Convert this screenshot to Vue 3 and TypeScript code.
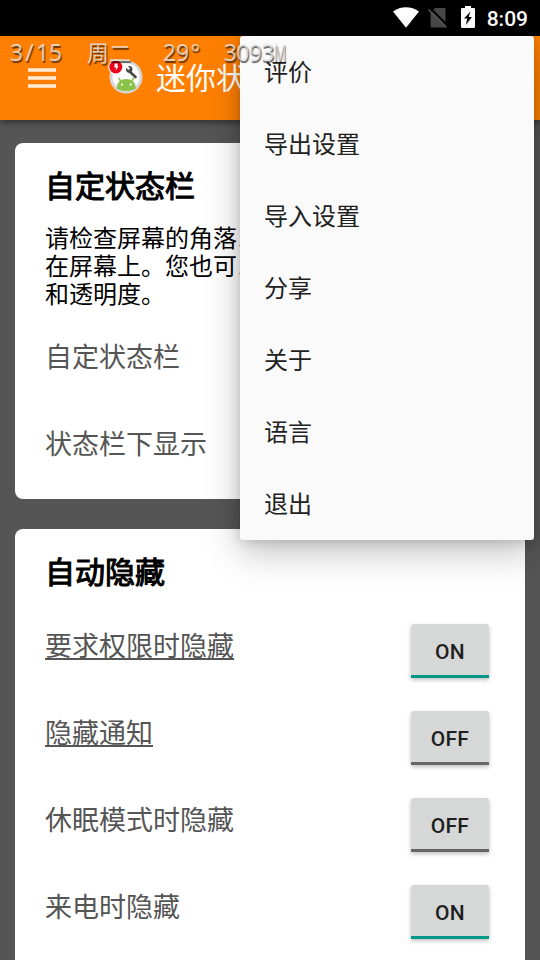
<script setup lang="ts">
interface Option {
  label: string
  on: boolean
  linked: boolean
}

const menuItems: string[] = ['评价', '导出设置', '导入设置', '分享', '关于', '语言', '退出']

const autoHide: Option[] = [
  { label: '要求权限时隐藏', on: true, linked: true },
  { label: '隐藏通知', on: false, linked: true },
  { label: '休眠模式时隐藏', on: false, linked: false },
  { label: '来电时隐藏', on: true, linked: false },
]

const miniStatus: { kind: string; chars: string[] }[] = [
  { kind: 'date', chars: ['3', '/', '1', '5'] },
  { kind: 'weekday', chars: ['周', '二'] },
  { kind: 'temp', chars: ['2', '9', '°'] },
  { kind: 'memory', chars: ['3', '0', '9', '3', 'M'] },
]
</script>

<template>
  <div class="screen">
    <div class="system-bar">
      <svg class="wifi" width="26" height="21" viewBox="0 0 26 21">
        <path d="M0 4.500C7.500-1.300 18.500-1.300 26 4.500L13 20.800z" fill="#fff" />
      </svg>
      <svg class="sim" width="20" height="22" viewBox="0 0 20 22">
        <path d="M7 1h9.500q1 0 1 1v17.500q0 1-1 1h-13q-1 0-1-1V6z" fill="#484848" />
        <path d="M2 1l18 18" stroke="#000" stroke-width="2" />
        <path d="M.5 2.500l18 18" stroke="#555" stroke-width="1.600" />
      </svg>
      <svg class="battery" width="14" height="22" viewBox="0 0 14 22">
        <path d="M4 0h6v2h3q1 0 1 1v18q0 1-1 1H1q-1 0-1-1V3q0-1 1-1h3z" fill="#fff" />
        <path d="M9.500 5.500L3 12.500h3.300L4.800 19 11 11H7.700z" fill="#000" />
      </svg>
      <span class="clock">8:09</span>
    </div>

    <header class="toolbar">
      <svg class="hamburger" width="28" height="20" viewBox="0 0 28 20">
        <path d="M0 2h28M0 10h28M0 18h28" stroke="#fff" stroke-opacity=".85" stroke-width="3.400" />
      </svg>
      <svg class="logo" width="36" height="36" viewBox="0 0 36 36">
        <circle cx="18" cy="18" r="16.500" fill="#d6d6d6" />
        <circle cx="18" cy="17.500" r="13.600" fill="#fff" />
        <path d="M21.500 12.500l6 5.500" stroke="#484848" stroke-width="2.600" stroke-linecap="round" />
        <path d="M18 8.800l2.400 2.300 1.700-1.600-2.200-2.200q3.700-.8 4.600 2 .4 2.500-1.500 4-3 1.200-4.500-.9-1-1.700-.5-3.600z" fill="#484848" />
        <path d="M9 30v-2.300a9.300 7.700 0 0 1 18.600 0V30q-9.300 4-18.600 0z" fill="#8bc34a" />
        <path d="M13 22.500l-2.300-3.500M23.500 22.500l2.300-3.500" stroke="#8bc34a" stroke-width="1.500" />
        <circle cx="14" cy="25.500" r="1.100" fill="#fff" />
        <circle cx="22.700" cy="25.500" r="1.100" fill="#fff" />
        <circle cx="7.800" cy="8" r="7.600" fill="#fff" />
        <circle cx="7.800" cy="8" r="6.500" fill="#f00018" />
        <path d="M6.700 4.500h3.300L9.200 7h1.300l-2.700 4.800.2-3.300H6.400z" fill="#fff" />
      </svg>
      <h1>迷你状态栏</h1>
    </header>

    <main>
      <section class="card">
        <h2>自定状态栏</h2>
        <p>请检查屏幕的角落以确定状态栏显示<br />在屏幕上。您也可以更改颜色、大小<br />和透明度。</p>
        <div class="option first"><span>自定状态栏</span></div>
        <div class="option"><span>状态栏下显示</span></div>
      </section>

      <section class="card">
        <h2>自动隐藏</h2>
        <div class="switches">
          <div v-for="item in autoHide" :key="item.label" class="option">
            <span :class="{ linked: item.linked }">{{ item.label }}</span>
            <button type="button" :class="{ on: item.on }">{{ item.on ? 'ON' : 'OFF' }}</button>
          </div>
        </div>
      </section>
    </main>

    <nav class="menu">
      <a v-for="item in menuItems" :key="item">{{ item }}</a>
    </nav>

    <div class="mini-status">
      <div v-for="group in miniStatus" :key="group.kind" class="group" :class="group.kind">
        <span v-for="(char, i) in group.chars" :key="i" :class="{ narrow: char === 'M' }">{{ char }}</span>
      </div>
    </div>
  </div>
</template>

<style>
body {
  margin: 0;
  overflow: hidden;
}
</style>

<style scoped>
.screen {
  position: relative;
  display: flex;
  flex-direction: column;
  width: 540px;
  height: 960px;
  overflow: hidden;
  background: #555;
  font-family: Roboto, 'Noto Sans CJK SC', sans-serif;
}

.system-bar {
  flex: none;
  display: flex;
  align-items: flex-start;
  box-sizing: border-box;
  height: 36px;
  padding: 6px 12px 0 0;
  justify-content: flex-end;
  background: #000;
  color: #fff;
}

.wifi {
  margin: 1px 9px 0 0;
}

.sim {
  margin: 1px 13px 0 0;
}

.battery {
  margin-right: 12px;
}

.clock {
  font-size: 21px;
  font-weight: 500;
  line-height: 26px;
}

.toolbar {
  flex: none;
  display: flex;
  align-items: center;
  box-sizing: border-box;
  height: 84px;
  padding-left: 28px;
  background: #ff8000;
  box-shadow: 0 2px 7px rgba(0, 0, 0, 0.5);
  z-index: 1;
}

.logo {
  margin: -3px 0 0 52px;
}

h1 {
  margin: 2px 0 0 12px;
  color: #fff;
  font-size: 30px;
  font-weight: 400;
  line-height: 44px;
}

main {
  display: flex;
  flex-direction: column;
  gap: 30px;
  padding: 23px 15px 0;
}

.card {
  flex: none;
  box-sizing: border-box;
  height: 356px;
  padding: 22px 36px 0 30px;
  border-radius: 8px;
  background: #fff;
}

.card:last-child {
  height: 450px;
}

h2 {
  margin: 0;
  color: #000;
  font-size: 30px;
  font-weight: 400;
  line-height: 44px;
  -webkit-text-stroke: 1.1px #000;
}

p {
  margin: 16px 0 0;
  color: #000;
  font-size: 24px;
  line-height: 28px;
  white-space: nowrap;
}

.option {
  display: flex;
  align-items: flex-start;
  justify-content: space-between;
  height: 87px;
  color: #555;
  font-size: 27px;
  line-height: 40px;
}

.option.first {
  margin-top: 29px;
}

.switches {
  margin-top: 29px;
}

.switches .option > span {
  margin-top: 3px;
}

.linked {
  text-decoration: underline;
  text-decoration-thickness: 2px;
  text-underline-offset: 2px;
  text-decoration-skip-ink: none;
}

button {
  box-sizing: border-box;
  width: 78px;
  height: 54px;
  padding: 5px 0 0;
  border: 0;
  border-bottom: 3px solid #666;
  border-radius: 3px 3px 0 0;
  background: #d6d7d7;
  box-shadow: 0 2px 4px rgba(0, 0, 0, 0.25);
  color: #1f1f1f;
  font-family: Roboto, sans-serif;
  font-size: 21px;
  font-weight: 500;
  letter-spacing: 0.3px;
}

button.on {
  border-bottom-color: #009688;
}

.menu {
  position: absolute;
  z-index: 2;
  top: 36px;
  left: 240px;
  width: 294px;
  border-radius: 3px;
  background: #fafafa;
  box-shadow: 0 12px 36px rgba(0, 0, 0, 0.25), 0 1px 12px rgba(0, 0, 0, 0.17);
}

.menu a {
  display: block;
  box-sizing: border-box;
  height: 72px;
  padding: 1px 0 0 24px;
  color: #212121;
  font-size: 24px;
  line-height: 72px;
}

.mini-status {
  position: absolute;
  z-index: 3;
  top: 37px;
  left: 10px;
  display: flex;
  color: rgba(230, 230, 230, 0.8);
  font-family: 'Noto Sans', 'Noto Sans CJK SC', sans-serif;
  font-size: 23px;
  line-height: 30px;
  text-shadow: 1px 2px 1px rgba(0, 0, 0, 0.6);
}

.group {
  display: flex;
}

.group span {
  display: flex;
  justify-content: center;
  width: 13px;
}

.weekday {
  margin-left: 25px;
  font-size: 22px;
}

.weekday span {
  width: 22px;
}

.temp {
  margin-left: 32px;
}

.memory {
  margin-left: 22px;
}

.memory span {
  width: 12.500px;
}

.memory .narrow {
  transform: scaleX(0.6);
}
</style>
